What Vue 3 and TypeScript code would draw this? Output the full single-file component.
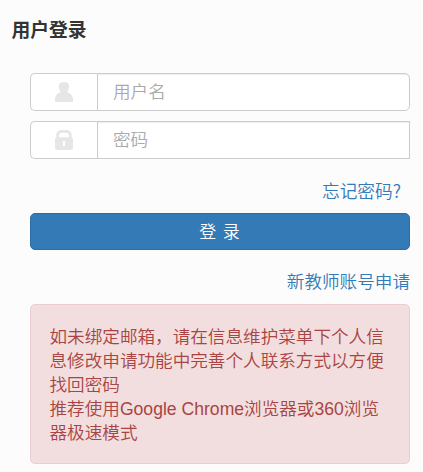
<script setup lang="ts">
import { ref } from 'vue'

const username = ref('')
const password = ref('')
</script>

<template>
  <main class="login">
    <h1 class="title">用户登录</h1>
    <form class="form" @submit.prevent>
      <div class="group">
        <span class="addon">
          <svg width="18" height="20" viewBox="0 0 18 20" aria-hidden="true">
            <path d="M9 0C5.5 0 3.9 1.4 3.9 4.4C3.9 6.6 4.4 8.2 5.8 9.2V10.1C2.2 11.4 0 14 0 18.2V20H18V18.2C18 14 15.8 11.4 12.2 10.1V9.2C13.6 8.2 14.1 6.6 14.1 4.4C14.1 1.4 12.5 0 9 0Z" />
          </svg>
        </span>
        <input v-model="username" class="input rounded" type="text" placeholder="用户名" />
      </div>
      <div class="group">
        <span class="addon">
          <svg width="18" height="20" viewBox="0 0 18 20" aria-hidden="true">
            <path fill-rule="evenodd" d="M1.3 7.5V5.5C1.3 2 3.2 0 6.8 0H11.2C14.8 0 16.7 2 16.7 5.5V7.5C17.6 7.9 18 8.6 18 9.6V17.3C18 19 17 20 15.3 20H2.7C1 20 0 19 0 17.3V9.6C0 8.6 .4 7.9 1.3 7.5ZM4 7.3H14V5.8C14 3.8 13 2.8 11 2.8H7C5 2.8 4 3.8 4 5.8ZM9 10.8C7.8 10.8 7.5 12 8 12.8V16H10V12.8C10.5 12 10.2 10.8 9 10.8Z" />
          </svg>
        </span>
        <input v-model="password" class="input" type="password" placeholder="密码" />
      </div>
      <a class="link forgot">忘记密码?</a>
      <button class="submit" type="submit">登 录</button>
      <a class="link apply">新教师账号申请</a>
      <div class="alert">
        如未绑定邮箱，请在信息维护菜单下个人信息修改申请功能中完善个人联系方式以方便找回密码<br />推荐使用Google Chrome浏览器或360浏览器极速模式
      </div>
    </form>
  </main>
</template>

<style>
body {
  background: #fcfcfc;
}
</style>

<style scoped>
.login {
  box-sizing: border-box;
  width: 423px;
  height: 472px;
  padding: 18px 13px 0 12px;
  font-family: "Liberation Sans", "Noto Sans CJK SC", sans-serif;
  font-size: 17.6px;
  font-weight: 350;
  line-height: 24px;
  color: #333;
}
.title {
  margin: 0 0 0 -0.5px;
  font-size: 18.8px;
  font-weight: 700;
  line-height: 25px;
}
.form {
  display: flex;
  flex-direction: column;
  padding: 30px 0 0 18px;
}
.group {
  display: flex;
  height: 38px;
  margin-bottom: 10px;
}
.addon {
  box-sizing: border-box;
  display: flex;
  align-items: center;
  justify-content: center;
  width: 67px;
  border: 1px solid #ccc;
  border-right: 0;
  border-radius: 5px 0 0 5px;
  background: #fff;
}
.addon svg {
  fill: #e6e6e6;
}
.input {
  box-sizing: border-box;
  flex: 1;
  min-width: 0;
  margin: 0;
  padding: 0 15px;
  border: 1px solid #ccc;
  border-radius: 0;
  outline: 0;
  background: #fff;
  box-shadow: inset 0 1px 1px rgba(0, 0, 0, 0.075);
  font: inherit;
}
.rounded {
  border-radius: 0 5px 5px 0;
}
.input::placeholder {
  color: #aaa;
  opacity: 1;
}
.link {
  align-self: flex-end;
  color: #337ab7;
  text-decoration: none;
}
.forgot {
  margin: 9px 9px 11px 0;
  font-family: "Noto Sans CJK SC", sans-serif;
  font-size: 17.7px;
}
.submit {
  height: 37px;
  margin: 0;
  padding: 2px 1px 0 0;
  border: 1px solid #2e6da4;
  border-radius: 5px;
  background: #337ab7;
  color: #fff;
  font: inherit;
  font-size: 17px;
  word-spacing: 2px;
}
.apply {
  margin: 20px 0 10px;
}
.alert {
  box-sizing: border-box;
  height: 160px;
  padding: 20px 19px 18px 18.5px;
  border: 1px solid #ebccd1;
  border-radius: 5px;
  background: #f2dede;
  color: #a94442;
}
</style>
